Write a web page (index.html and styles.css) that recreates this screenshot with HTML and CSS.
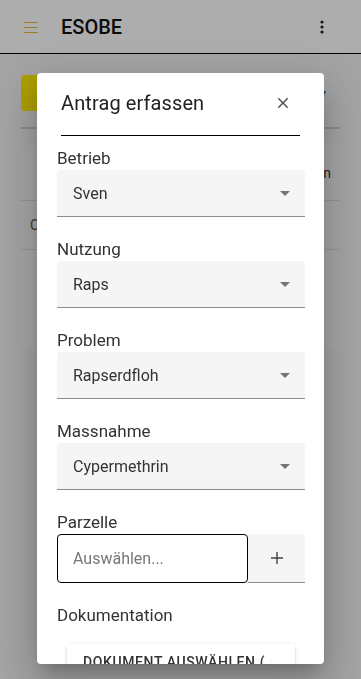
FILE: index.html
```html
<!DOCTYPE html>
<html>
<head>
	<title>ESOBE</title>
	<link rel="stylesheet" href="styles.css">
</head>
<body>
	<div class="app">
		<header class="toolbar">
			<span class="menu_icon">
				<svg width="14" height="11" viewBox="0 0 14 11"><path d="M0 0.5h14M0 5.5h14M0 10.5h14" stroke="currentColor" stroke-width="1"/></svg>
			</span>
			<span class="app_title">ESOBE</span>
			<span class="spacer"></span>
			<span class="more_icon">
				<svg width="4" height="14" viewBox="0 0 4 14"><circle cx="2" cy="2" r="1.6"/><circle cx="2" cy="7" r="1.6"/><circle cx="2" cy="12" r="1.6"/></svg>
			</span>
		</header>

		<main class="content">
			<div class="actions">
				<button class="new_btn">Neuer Antrag</button>
				<span class="page_select">▾</span>
			</div>
			<div class="divider"></div>
			<div class="card">
				<div class="card_row card_head"><span></span><span>Aktion</span></div>
				<div class="card_row"><span>Cypermethrin</span></div>
				<div class="card_row card_empty"></div>
			</div>
		</main>
	</div>

	<div class="backdrop"></div>

	<div class="dialog">
		<div class="dialog_title">
			<span>Antrag erfassen</span>
			<span class="close_icon">
				<svg width="18" height="18" viewBox="0 0 24 24"><path d="M19 6.41L17.59 5 12 10.59 6.41 5 5 6.41 10.59 12 5 17.59 6.41 19 12 13.41 17.59 19 19 17.59 13.41 12z"/></svg>
			</span>
		</div>

		<div class="dialog_body">
			<div class="field">
				<label class="field_label">Betrieb</label>
				<div class="select"><span>Sven</span><span class="arrow"></span></div>
			</div>
			<div class="field">
				<label class="field_label">Nutzung</label>
				<div class="select"><span>Raps</span><span class="arrow"></span></div>
			</div>
			<div class="field">
				<label class="field_label">Problem</label>
				<div class="select"><span>Rapserdfloh</span><span class="arrow"></span></div>
			</div>
			<div class="field">
				<label class="field_label">Massnahme</label>
				<div class="select"><span>Cypermethrin</span><span class="arrow"></span></div>
			</div>
			<div class="field">
				<label class="field_label">Parzelle</label>
				<div class="input_group">
					<input class="parcel_input" type="text" placeholder="Auswählen...">
					<span class="add_btn">
						<svg width="12" height="12" viewBox="0 0 12 12"><path d="M6 0v12M0 6h12" stroke="currentColor" stroke-width="1.4"/></svg>
					</span>
				</div>
			</div>
			<div class="field">
				<label class="field_label">Dokumentation</label>
				<button class="doc_btn">Dokument auswählen (<wbr>PDF, max. 10 MB)</button>
			</div>
		</div>
	</div>
</body>
</html>
```

FILE: styles.css
```css
html, body { margin: 0; padding: 0; }
body { font-family: Roboto, "Noto Sans", sans-serif; background: #f2f2f2; color: #222; }

/* toolbar */
.toolbar { height: 53px; border-bottom: 1px solid #000; background: #fff; display: flex; align-items: center; padding: 0 16px 0 24px; }
.menu_icon { color: #e0be2a; display: flex; margin-top: 1px; }
.app_title { margin-left: 23px; font-size: 20px; font-weight: 500; color: #111; }
.spacer { flex: 1; }
.more_icon { display: flex; fill: #222; margin-right: 21px; }

/* page behind the dialog */
.content { padding: 21px 21px 0; }
.actions { display: flex; align-items: center; justify-content: space-between; }
.new_btn { height: 36px; border: 0; border-radius: 4px; background: #ffeb00; padding: 0 16px; font: 500 14px Roboto, sans-serif; }
.page_select { color: #3a5a80; font-size: 12px; margin-right: 14px; }
.divider { height: 2px; background: #ccc; margin-top: 16px; }
.card { margin-top: 16px; background: #f6f6f6; }
.card_row { display: flex; justify-content: space-between; align-items: center; height: 48px; border-bottom: 1px solid #ddd; padding: 0 9px; font-size: 14px; color: #555; }
.card_head { height: 55px; color: #333; }
.card_empty { height: 100px; border-bottom: 0; }

.backdrop { position: fixed; top: 0; left: 0; right: 0; bottom: 0; background: rgba(0, 0, 0, .32); }

/* dialog */
.dialog { position: fixed; left: 37px; top: 73px; width: 287px; height: 591px; overflow: hidden; background: #fff; border-radius: 4px;
	box-shadow: 0 11px 15px -7px rgba(0,0,0,.2), 0 24px 38px 3px rgba(0,0,0,.14), 0 9px 46px 8px rgba(0,0,0,.12); }
.dialog_title { margin: 0 24px; padding: 14px 0 16px; border-bottom: 1px solid #000; display: flex; align-items: center; justify-content: space-between; font-size: 20px; line-height: 32px; font-weight: 400; letter-spacing: .1px; color: #222; }
.close_icon { display: flex; fill: #555; margin-right: 8px; }

.dialog_body { padding: 10px 19px 0 20px; }
.field { margin-bottom: 20px; }
.field_label { display: block; font-size: 17px; line-height: 24px; color: #333; }
.select { height: 46px; background: #f5f5f5; border-radius: 4px 4px 0 0; border-bottom: 1px solid #8c8c8c; display: flex; align-items: center; justify-content: space-between; padding: 0 15px 0 16px; font-size: 16px; color: #333; }
.arrow { width: 0; height: 0; border-left: 5px solid transparent; border-right: 5px solid transparent; border-top: 5px solid #757575; }

.input_group { display: flex; height: 49px; }
.parcel_input { box-sizing: border-box; width: 191px; height: 49px; border: 1px solid #000; border-radius: 4px; padding: 0 15px; font: 16px Roboto, sans-serif; color: #333; outline: none; }
.parcel_input::placeholder { color: #777; }
.add_btn { flex: 1; display: flex; align-items: center; justify-content: center; background: #f5f5f5; border-radius: 0 4px 0 0; border-bottom: 1px solid #8c8c8c; color: #444; }

.doc_btn { display: block; margin: 17px 0 0 10px; width: 228px; background: #fff; border: 0; border-radius: 4px; padding: 8px 16px; text-align: left; font: 500 14px/20px Roboto, sans-serif; letter-spacing: .6px; text-transform: uppercase; color: #333;
	box-shadow: 0 3px 1px -2px rgba(0,0,0,.2), 0 2px 2px 0 rgba(0,0,0,.14), 0 1px 5px 0 rgba(0,0,0,.12); }
```
